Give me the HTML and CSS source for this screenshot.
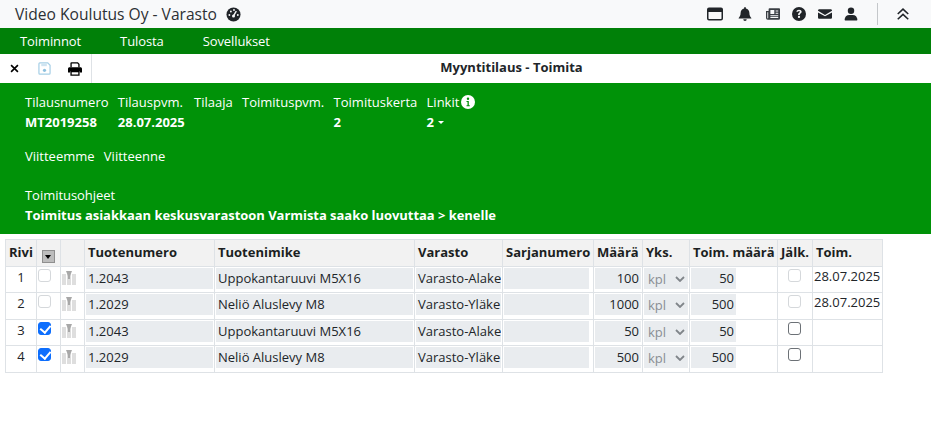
FILE: index.html
```html
<!DOCTYPE html>
<html lang="fi">
<head>
    <meta charset="UTF-8">
    <title>Myyntitilaus - Toimita</title>
    <link rel="stylesheet" href="styles.css">
</head>
<body>
    <!-- Yläpalkki -->
    <header class="topbar">
        <div class="brand">
            <span>Video Koulutus Oy - Varasto</span>
            <svg class="brand-icon" viewBox="0 0 16 16"><circle cx="8" cy="8" r="7.5" fill="#212529"/><circle cx="8" cy="9.5" r="1.6" fill="#f8f9fa"/><path d="M8 9.5 11 4.5" stroke="#f8f9fa" stroke-width="1.5"/><circle cx="3.6" cy="8.5" r="1" fill="#f8f9fa"/><circle cx="5.2" cy="4.8" r="1" fill="#f8f9fa"/><circle cx="8.5" cy="3.2" r="1" fill="#f8f9fa"/><circle cx="12.6" cy="8.5" r="1" fill="#f8f9fa"/></svg>
        </div>
        <div class="top-icons">
            <svg class="ic-window" viewBox="0 0 16 16"><path d="M2 1.500h12a2 2 0 0 1 2 2v9a2 2 0 0 1-2 2H2a2 2 0 0 1-2-2v-9a2 2 0 0 1 2-2zm-.5 4.500v6.500c0 .3.200.5.500.5h12c.3 0 .5-.2.5-.5V6z" fill="#212529" fill-rule="evenodd"/></svg>
            <svg class="ic-bell" viewBox="0 0 16 16"><path d="M8 0c.6 0 1 .4 1 1v.7c2.300.5 4 2.500 4 4.900 0 3.600 1.300 4.800 2 5.600.2.200.3.500.3.800H.7c0-.3.100-.6.300-.8.700-.8 2-2 2-5.600 0-2.400 1.700-4.400 4-4.900V1c0-.6.400-1 1-1zM6 14h4a2 2 0 0 1-4 0z" fill="#212529"/></svg>
            <svg viewBox="0 0 16 16"><path d="M4 1.500h11a1 1 0 0 1 1 1V13a1.500 1.500 0 0 1-1.500 1.500H2A2 2 0 0 1 0 12.500V4.500h3V2.500a1 1 0 0 1 1-1zM1.500 6v6.500c0 .3.200.5.500.5s.5-.2.500-.5V6zM5 3.500V8h4.500V3.500zm6 .5v1.200h3V4zm0 2.500v1.200h3V6.500zM5 9.500v1.200h9V9.500zm0 2v1.200h9v-1.200z" fill="#3a3f44" fill-rule="evenodd"/></svg>
            <svg viewBox="0 0 16 16"><path d="M8 0a8 8 0 1 1 0 16A8 8 0 0 1 8 0zM8 3C6.300 3 5.100 3.900 5 5.500h2c.1-.6.400-.9 1-.9s.9.300.9.800c0 .4-.2.700-.8 1.100C7.200 7.100 6.900 7.700 7 9h1.900c0-.8.200-1.100.9-1.600.8-.5 1.200-1.200 1.200-2.100C11 3.900 9.800 3 8 3zm0 7a1.300 1.300 0 1 0 0 2.600A1.300 1.300 0 0 0 8 10z" fill="#212529" fill-rule="evenodd"/></svg>
            <svg viewBox="0 0 16 16"><path d="M1.500 2.500h13c.8 0 1.500.7 1.500 1.500v.4L8 9 0 4.400V4c0-.8.700-1.500 1.500-1.500zM0 6.200V12c0 .8.700 1.500 1.500 1.500h13c.8 0 1.500-.7 1.500-1.500V6.200l-8 4.500z" fill="#212529"/></svg>
            <svg viewBox="0 0 16 16"><circle cx="8" cy="4.200" r="3.700" fill="#212529"/><path d="M1.500 15.500c-.5 0-.8-.3-.8-.8C.7 11.500 3 9.200 6 9.200h4c3 0 5.300 2.300 5.300 5.500 0 .5-.3.800-.8.800z" fill="#212529"/></svg>
            <span class="top-sep"></span>
            <svg viewBox="0 0 16 16"><path d="M2 8l6-5.500L14 8M2 14l6-5.500L14 14" fill="none" stroke="#212529" stroke-width="1.800"/></svg>
        </div>
    </header>

    <!-- Päävalikko -->
    <nav class="menu">
        <a>Toiminnot</a>
        <a>Tulosta</a>
        <a>Sovellukset</a>
    </nav>

    <!-- Työkalurivi -->
    <div class="toolbar">
        <div class="tools">
            <svg class="tool-close" viewBox="0 0 10 10"><path d="M1.200 1.200l7.600 7.600M8.800 1.200L1.200 8.800" stroke="#000" stroke-width="1.800"/></svg>
            <svg class="tool-save" viewBox="0 0 14 14"><path d="M2 1h8.500L13 3.500V12a1 1 0 0 1-1 1H2a1 1 0 0 1-1-1V2a1 1 0 0 1 1-1z" fill="none" stroke="#a6cfe6" stroke-width="1.300"/><path d="M3.500 1.500h6v3h-6z" fill="#cfe4f1"/><circle cx="7" cy="9" r="1.700" fill="#8cc0de"/></svg>
            <svg class="tool-print" viewBox="0 0 16 16"><path d="M3.500 6V1.500c0-.3.200-.5.500-.5h7l1.500 1.500V6" fill="none" stroke="#000" stroke-width="1.500"/><path d="M1.800 6h12.400c1 0 1.800.8 1.800 1.800V12h-2.500v-1.500h-11V12H0V7.800C0 6.800.8 6 1.800 6z" fill="#000"/><path d="M3.500 11h9v4h-9z" fill="none" stroke="#000" stroke-width="1.500"/></svg>
        </div>
        <div class="page-title">Myyntitilaus - Toimita</div>
    </div>

    <!-- Tilauksen tiedot -->
    <section class="order">
        <div class="order-row">
            <div class="info"><span>Tilausnumero</span><b>MT2019258</b></div>
            <div class="info"><span>Tilauspvm.</span><b>28.07.2025</b></div>
            <div class="info"><span>Tilaaja</span></div>
            <div class="info"><span>Toimituspvm.</span></div>
            <div class="info"><span>Toimituskerta</span><b>2</b></div>
            <div class="info">
                <span class="info-head">Linkit
                    <svg class="info-icon" viewBox="0 0 14 14"><circle cx="7" cy="7" r="7" fill="#fff"/><circle cx="7" cy="3.800" r="1.200" fill="#009208"/><path d="M5.500 6h2.300v4.200h1v1H5.500v-1h1V7H5.500z" fill="#009208"/></svg>
                </span>
                <b>2<i class="caret"></i></b>
            </div>
        </div>
        <div class="order-row refs">
            <div class="info"><span>Viitteemme</span></div>
            <div class="info"><span>Viitteenne</span></div>
        </div>
        <div class="info notes">
            <span>Toimitusohjeet</span>
            <b>Toimitus asiakkaan keskusvarastoon Varmista saako luovuttaa &gt; kenelle</b>
        </div>
    </section>

    <!-- Rivit -->
    <table class="rows">
        <colgroup>
            <col class="c-rivi"><col class="c-check"><col class="c-icon"><col class="c-num"><col class="c-name"><col class="c-store"><col class="c-serial"><col class="c-qty"><col class="c-unit"><col class="c-deliv"><col class="c-back"><col class="c-date">
        </colgroup>
        <thead>
            <tr>
                <th class="center">Rivi</th>
                <th class="center sort-cell"><span class="sort-btn"></span></th>
                <th></th>
                <th>Tuotenumero</th>
                <th>Tuotenimike</th>
                <th>Varasto</th>
                <th>Sarjanumero</th>
                <th>Määrä</th>
                <th>Yks.</th>
                <th>Toim. määrä</th>
                <th class="center">Jälk.</th>
                <th>Toim.</th>
            </tr>
        </thead>
        <tbody>
            <tr>
                <td class="center">1</td>
                <td class="pick"><input type="checkbox" disabled></td>
                <td><svg class="col-icon" viewBox="0 0 14 14"><path d="M0 3h4v11H0zM5 3h4v11H5zM10 3h4v11h-4z" fill="#dedede"/><path d="M4 0h6L8 5v3H6V5z" fill="#a8a8a8"/></svg></td>
                <td><div class="field">1.2043</div></td>
                <td><div class="field">Uppokantaruuvi M5X16</div></td>
                <td><div class="field">Varasto-Alake</div></td>
                <td><div class="field serial"></div></td>
                <td><div class="field right">100</div></td>
                <td><div class="field unit">kpl<svg viewBox="0 0 10 6"><path d="M1 1l4 4 4-4" fill="none" stroke="#80858a" stroke-width="1.800"/></svg></div></td>
                <td><div class="field right short">50</div></td>
                <td class="back"><input type="checkbox" disabled></td>
                <td class="date">28.07.2025</td>
            </tr>
            <tr>
                <td class="center">2</td>
                <td class="pick"><input type="checkbox" disabled></td>
                <td><svg class="col-icon" viewBox="0 0 14 14"><path d="M0 3h4v11H0zM5 3h4v11H5zM10 3h4v11h-4z" fill="#dedede"/><path d="M4 0h6L8 5v3H6V5z" fill="#a8a8a8"/></svg></td>
                <td><div class="field">1.2029</div></td>
                <td><div class="field">Neliö Aluslevy M8</div></td>
                <td><div class="field">Varasto-Yläke</div></td>
                <td><div class="field serial"></div></td>
                <td><div class="field right">1000</div></td>
                <td><div class="field unit">kpl<svg viewBox="0 0 10 6"><path d="M1 1l4 4 4-4" fill="none" stroke="#80858a" stroke-width="1.800"/></svg></div></td>
                <td><div class="field right short">500</div></td>
                <td class="back"><input type="checkbox" disabled></td>
                <td class="date">28.07.2025</td>
            </tr>
            <tr>
                <td class="center">3</td>
                <td class="pick"><input type="checkbox" checked></td>
                <td><svg class="col-icon" viewBox="0 0 14 14"><path d="M0 3h4v11H0zM5 3h4v11H5zM10 3h4v11h-4z" fill="#dedede"/><path d="M4 0h6L8 5v3H6V5z" fill="#a8a8a8"/></svg></td>
                <td><div class="field">1.2043</div></td>
                <td><div class="field">Uppokantaruuvi M5X16</div></td>
                <td><div class="field">Varasto-Alake</div></td>
                <td><div class="field serial"></div></td>
                <td><div class="field right">50</div></td>
                <td><div class="field unit">kpl<svg viewBox="0 0 10 6"><path d="M1 1l4 4 4-4" fill="none" stroke="#80858a" stroke-width="1.800"/></svg></div></td>
                <td><div class="field right short">50</div></td>
                <td class="back"><input type="checkbox"></td>
                <td class="date"></td>
            </tr>
            <tr>
                <td class="center">4</td>
                <td class="pick"><input type="checkbox" checked></td>
                <td><svg class="col-icon" viewBox="0 0 14 14"><path d="M0 3h4v11H0zM5 3h4v11H5zM10 3h4v11h-4z" fill="#dedede"/><path d="M4 0h6L8 5v3H6V5z" fill="#a8a8a8"/></svg></td>
                <td><div class="field">1.2029</div></td>
                <td><div class="field">Neliö Aluslevy M8</div></td>
                <td><div class="field">Varasto-Yläke</div></td>
                <td><div class="field serial"></div></td>
                <td><div class="field right">500</div></td>
                <td><div class="field unit">kpl<svg viewBox="0 0 10 6"><path d="M1 1l4 4 4-4" fill="none" stroke="#80858a" stroke-width="1.800"/></svg></div></td>
                <td><div class="field right short">500</div></td>
                <td class="back"><input type="checkbox"></td>
                <td class="date"></td>
            </tr>
        </tbody>
    </table>
</body>
</html>
```
FILE: styles.css
```css
* {
    margin: 0;
    padding: 0;
    box-sizing: border-box;
}

body {
    font-family: 'Open Sans', sans-serif;
    font-size: 13px;
    line-height: 20px;
    color: #212529;
    background-color: #fff;
}

/* Top bar */
.topbar {
    display: flex;
    justify-content: space-between;
    align-items: center;
    height: 28px;
    padding: 0 21px 0 15px;
    background-color: #f8f9fa;
}

.brand {
    display: flex;
    align-items: center;
    gap: 9px;
    font-size: 15.6px;
    color: #2c3034;
}

.brand-icon {
    width: 15px;
    height: 15px;
}

.top-icons {
    display: flex;
    align-items: center;
    gap: 12px;
}

.top-icons svg {
    width: 14px;
    height: 14px;
}

.top-icons .ic-window {
    width: 16px;
    height: 16px;
    margin-right: 3px;
}

.top-icons .ic-bell {
    margin-right: 2px;
}

.top-sep {
    width: 1px;
    height: 22px;
    margin: 0 6px 0 7px;
    background-color: #c4c7ca;
}

/* Menu */
.menu {
    display: flex;
    gap: 39px;
    height: 26px;
    padding-left: 20px;
    align-items: center;
    letter-spacing: -0.1px;
    background-color: #008008;
}

.menu a {
    color: #fff;
}

/* Toolbar */
.toolbar {
    display: flex;
    height: 29px;
}

.tools {
    display: flex;
    align-items: center;
    width: 92px;
    padding-left: 10px;
    border-right: 1px solid #dee2e6;
}

.tool-close {
    width: 9px;
    height: 9px;
}

.tool-save {
    width: 13px;
    height: 13px;
    margin-left: 19px;
}

.tool-print {
    width: 14px;
    height: 14px;
    margin-left: 17px;
}

.page-title {
    flex: 1;
    padding-top: 3px;
    text-align: center;
    font-weight: 700;
    color: #212529;
}

/* Order info */
.order {
    height: 151px;
    padding: 9px 0 0 25px;
    background-color: #009208;
    color: #fff;
}

.order-row {
    display: flex;
    gap: 9.3px;
}

.info {
    display: flex;
    flex-direction: column;
}

.info b {
    font-weight: 700;
}

.info-head {
    display: flex;
    align-items: center;
    gap: 2px;
}

.info-icon {
    width: 14px;
    height: 14px;
}

.caret {
    display: inline-block;
    margin: 0 0 3px 4px;
    vertical-align: middle;
    border-top: 3px solid #fff;
    border-left: 3px solid transparent;
    border-right: 3px solid transparent;
}

.refs {
    margin-top: 14px;
}

.notes {
    margin-top: 19px;
    letter-spacing: -0.04px;
}

/* Rows table */
.rows {
    width: 877px;
    margin: 5px 0 0 5px;
    table-layout: fixed;
    border-collapse: collapse;
}

.c-rivi { width: 31px; }
.c-check { width: 24px; }
.c-icon { width: 24px; }
.c-num { width: 130px; }
.c-name { width: 200px; }
.c-store { width: 88px; }
.c-serial { width: 91px; }
.c-qty { width: 49px; }
.c-unit { width: 47px; }
.c-deliv { width: 88px; }
.c-back { width: 35px; }
.c-date { width: 70px; }

.rows th,
.rows td {
    border: 1px solid #dee2e6;
    vertical-align: top;
}

.rows th {
    height: 27px;
    padding: 0 2px 2px 3px;
    background-color: #f2f2f2;
    font-weight: 700;
    text-align: left;
    white-space: nowrap;
    vertical-align: middle;
    color: #1c1f22;
}

.rows th.sort-cell {
    padding-top: 3px;
    padding-bottom: 0;
}

.rows td {
    height: 26px;
    padding: 1px;
}

.rows tbody tr:nth-child(even) td {
    height: 27px;
}

.rows th.center,
.rows td.center {
    text-align: center;
    padding-left: 0;
    padding-right: 0;
}

.rows td.center {
    padding-top: 0;
}

.rows td.date {
    padding: 0 0 0 1px;
    line-height: 18px;
    white-space: nowrap;
}

.field {
    height: 21px;
    padding: 0 2px;
    background-color: #e9ecef;
    overflow: hidden;
    white-space: nowrap;
}

.serial {
    width: 85px;
}

.right {
    text-align: right;
}

.short {
    width: 45px;
}

.unit {
    display: flex;
    justify-content: space-between;
    align-items: center;
    padding: 0 3px 0 4px;
    color: #8a8f94;
}

.unit svg {
    width: 10px;
    height: 6px;
}

.col-icon {
    display: block;
    width: 14px;
    height: 14px;
    margin: 3px 0 0 0;
}

.sort-btn {
    display: inline-block;
    position: relative;
    width: 13px;
    height: 13px;
    background-color: #bdbdbd;
    border: 1px solid #8f8f8f;
    vertical-align: middle;
}

.sort-btn::after {
    content: '';
    position: absolute;
    left: 2px;
    top: 4px;
    border-top: 4px solid #000;
    border-left: 3.5px solid transparent;
    border-right: 3.5px solid transparent;
}

input[type="checkbox"] {
    appearance: none;
    display: block;
    position: relative;
    width: 13px;
    height: 13px;
    margin-top: 1px;
    background-color: #fff;
    border: 1px solid #6c7176;
    border-radius: 3px;
}

.pick input[type="checkbox"] {
    margin-left: 0;
}

.back input[type="checkbox"] {
    margin-left: 9px;
}

input[type="checkbox"]:disabled {
    border-color: #d5d8db;
}

input[type="checkbox"]:checked {
    background-color: #0d6efd;
    border-color: #0d6efd;
}

input[type="checkbox"]:checked::after {
    content: '';
    position: absolute;
    left: 3px;
    top: 0;
    width: 5px;
    height: 8px;
    border-right: 2px solid #fff;
    border-bottom: 2px solid #fff;
    transform: rotate(40deg);
}
```
